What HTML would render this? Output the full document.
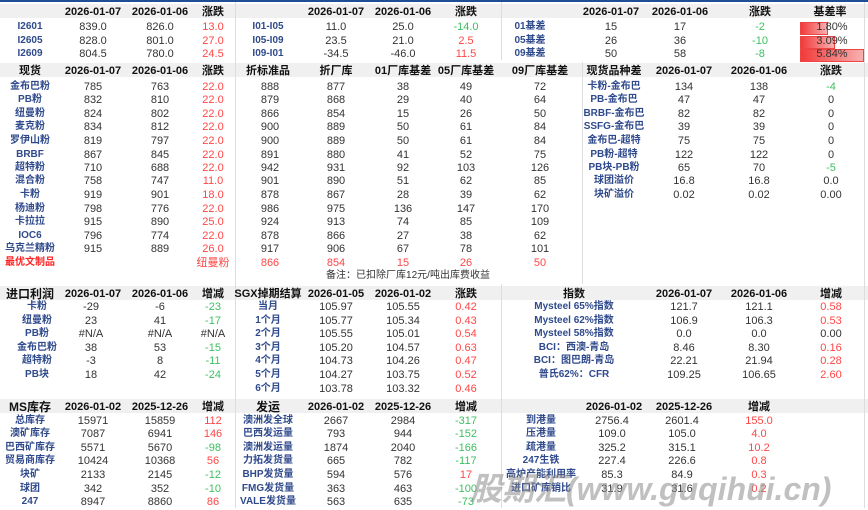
<!DOCTYPE html>
<html><head><meta charset="utf-8"><style>
body{margin:0;width:868px;height:508px;background:#fff;position:relative;overflow:hidden;font-family:"Liberation Sans","Noto Sans CJK SC",sans-serif;}
.bar{position:absolute;left:0;width:868px;height:14px;background:#f0f0f0}
.r{position:absolute;left:0;width:868px;height:14px;font-size:11px;line-height:14px;color:#333}
.r span{position:absolute;transform:translateX(-50%);white-space:nowrap;top:0}
.h span{font-weight:bold;color:#111}
.l{color:#2f4a8c;font-size:10px;font-weight:bold}
.R{color:#ff4646}.G{color:#3cc060}
.vl{position:absolute;width:1px;background:#ddd}
.bb{position:absolute;height:11px;background:linear-gradient(90deg,#f23a3a,#f8b0b0);border:1px solid #e44}
.wm{position:absolute;left:470px;top:464px;font-size:32px;font-weight:bold;font-style:italic;color:rgba(140,140,140,0.55);white-space:nowrap}
</style></head><body>
<div style="position:absolute;left:0;top:0;width:868px;height:2px;background:#1f4e96"></div>
<div class="bar" style="top:4px"></div>
<div class="bar" style="top:63px"></div>
<div class="bar" style="top:286px"></div>
<div class="bar" style="top:399px"></div>
<div class="vl" style="left:235px;top:2px;height:506px"></div>
<div class="vl" style="left:501px;top:2px;height:58px"></div>
<div class="vl" style="left:582px;top:62px;height:222px"></div>
<div class="vl" style="left:501px;top:284px;height:224px"></div>
<div class="vl" style="left:864px;top:2px;height:506px"></div>

<div class="r h" style="top:5px"><span style="left:93px">2026-01-07</span><span style="left:160px">2026-01-06</span><span style="left:213px">涨跌</span><span style="left:336px">2026-01-07</span><span style="left:403px">2026-01-06</span><span style="left:466px">涨跌</span><span style="left:611px">2026-01-07</span><span style="left:680px">2026-01-06</span><span style="left:760px">涨跌</span><span style="left:830px">基差率</span></div>
<div class="bb" style="left:800px;top:22px;width:26px"></div>
<div class="bb" style="left:800px;top:36px;width:33px"></div>
<div class="bb" style="left:800px;top:49px;width:62px"></div>
<div class="r" style="top:20px"><span class="l" style="left:30px">I2601</span><span style="left:93px">839.0</span><span style="left:160px">826.0</span><span class="R" style="left:213px">13.0</span><span class="l" style="left:268px">I01-I05</span><span style="left:336px">11.0</span><span style="left:403px">25.0</span><span class="G" style="left:466px">-14.0</span><span class="l" style="left:530px">01基差</span><span style="left:611px">15</span><span style="left:680px">17</span><span class="G" style="left:760px">-2</span><span style="left:832px">1.80%</span></div>
<div class="r" style="top:34px"><span class="l" style="left:30px">I2605</span><span style="left:93px">828.0</span><span style="left:160px">801.0</span><span class="R" style="left:213px">27.0</span><span class="l" style="left:268px">I05-I09</span><span style="left:336px">23.5</span><span style="left:403px">21.0</span><span class="R" style="left:466px">2.5</span><span class="l" style="left:530px">05基差</span><span style="left:611px">26</span><span style="left:680px">36</span><span class="G" style="left:760px">-10</span><span style="left:832px">3.09%</span></div>
<div class="r" style="top:47px"><span class="l" style="left:30px">I2609</span><span style="left:93px">804.5</span><span style="left:160px">780.0</span><span class="R" style="left:213px">24.5</span><span class="l" style="left:268px">I09-I01</span><span style="left:336px">-34.5</span><span style="left:403px">-46.0</span><span class="R" style="left:466px">11.5</span><span class="l" style="left:530px">09基差</span><span style="left:611px">50</span><span style="left:680px">58</span><span class="G" style="left:760px">-8</span><span style="left:832px">5.84%</span></div>

<div class="r h" style="top:64px"><span style="left:30px">现货</span><span style="left:93px">2026-01-07</span><span style="left:160px">2026-01-06</span><span style="left:213px">涨跌</span><span style="left:268px">折标准品</span><span style="left:336px">折厂库</span><span style="left:403px">01厂库基差</span><span style="left:466px">05厂库基差</span><span style="left:540px">09厂库基差</span><span style="left:614px">现货品种差</span><span style="left:684px">2026-01-07</span><span style="left:759px">2026-01-06</span><span style="left:831px">涨跌</span></div>
<div class="r" style="top:80px"><span class="l" style="left:30px">金布巴粉</span><span style="left:93px">785</span><span style="left:160px">763</span><span class="R" style="left:213px">22.0</span><span style="left:270px">888</span><span style="left:336px">877</span><span style="left:403px">38</span><span style="left:466px">49</span><span style="left:540px">72</span><span class="l" style="left:614px">卡粉-金布巴</span><span style="left:684px">134</span><span style="left:759px">138</span><span class="G" style="left:831px">-4</span></div>
<div class="r" style="top:93px"><span class="l" style="left:30px">PB粉</span><span style="left:93px">832</span><span style="left:160px">810</span><span class="R" style="left:213px">22.0</span><span style="left:270px">879</span><span style="left:336px">868</span><span style="left:403px">29</span><span style="left:466px">40</span><span style="left:540px">64</span><span class="l" style="left:614px">PB-金布巴</span><span style="left:684px">47</span><span style="left:759px">47</span><span style="left:831px">0</span></div>
<div class="r" style="top:107px"><span class="l" style="left:30px">纽曼粉</span><span style="left:93px">824</span><span style="left:160px">802</span><span class="R" style="left:213px">22.0</span><span style="left:270px">866</span><span style="left:336px">854</span><span style="left:403px">15</span><span style="left:466px">26</span><span style="left:540px">50</span><span class="l" style="left:614px">BRBF-金布巴</span><span style="left:684px">82</span><span style="left:759px">82</span><span style="left:831px">0</span></div>
<div class="r" style="top:120px"><span class="l" style="left:30px">麦克粉</span><span style="left:93px">834</span><span style="left:160px">812</span><span class="R" style="left:213px">22.0</span><span style="left:270px">900</span><span style="left:336px">889</span><span style="left:403px">50</span><span style="left:466px">61</span><span style="left:540px">84</span><span class="l" style="left:614px">SSFG-金布巴</span><span style="left:684px">39</span><span style="left:759px">39</span><span style="left:831px">0</span></div>
<div class="r" style="top:134px"><span class="l" style="left:30px">罗伊山粉</span><span style="left:93px">819</span><span style="left:160px">797</span><span class="R" style="left:213px">22.0</span><span style="left:270px">900</span><span style="left:336px">889</span><span style="left:403px">50</span><span style="left:466px">61</span><span style="left:540px">84</span><span class="l" style="left:614px">金布巴-超特</span><span style="left:684px">75</span><span style="left:759px">75</span><span style="left:831px">0</span></div>
<div class="r" style="top:148px"><span class="l" style="left:30px">BRBF</span><span style="left:93px">867</span><span style="left:160px">845</span><span class="R" style="left:213px">22.0</span><span style="left:270px">891</span><span style="left:336px">880</span><span style="left:403px">41</span><span style="left:466px">52</span><span style="left:540px">75</span><span class="l" style="left:614px">PB粉-超特</span><span style="left:684px">122</span><span style="left:759px">122</span><span style="left:831px">0</span></div>
<div class="r" style="top:161px"><span class="l" style="left:30px">超特粉</span><span style="left:93px">710</span><span style="left:160px">688</span><span class="R" style="left:213px">22.0</span><span style="left:270px">942</span><span style="left:336px">931</span><span style="left:403px">92</span><span style="left:466px">103</span><span style="left:540px">126</span><span class="l" style="left:614px">PB块-PB粉</span><span style="left:684px">65</span><span style="left:759px">70</span><span class="G" style="left:831px">-5</span></div>
<div class="r" style="top:174px"><span class="l" style="left:30px">混合粉</span><span style="left:93px">758</span><span style="left:160px">747</span><span class="R" style="left:213px">11.0</span><span style="left:270px">901</span><span style="left:336px">890</span><span style="left:403px">51</span><span style="left:466px">62</span><span style="left:540px">85</span><span class="l" style="left:614px">球团溢价</span><span style="left:684px">16.8</span><span style="left:759px">16.8</span><span style="left:831px">0.0</span></div>
<div class="r" style="top:188px"><span class="l" style="left:30px">卡粉</span><span style="left:93px">919</span><span style="left:160px">901</span><span class="R" style="left:213px">18.0</span><span style="left:270px">878</span><span style="left:336px">867</span><span style="left:403px">28</span><span style="left:466px">39</span><span style="left:540px">62</span><span class="l" style="left:614px">块矿溢价</span><span style="left:684px">0.02</span><span style="left:759px">0.02</span><span style="left:831px">0.00</span></div>
<div class="r" style="top:202px"><span class="l" style="left:30px">杨迪粉</span><span style="left:93px">798</span><span style="left:160px">776</span><span class="R" style="left:213px">22.0</span><span style="left:270px">986</span><span style="left:336px">975</span><span style="left:403px">136</span><span style="left:466px">147</span><span style="left:540px">170</span></div>
<div class="r" style="top:215px"><span class="l" style="left:30px">卡拉拉</span><span style="left:93px">915</span><span style="left:160px">890</span><span class="R" style="left:213px">25.0</span><span style="left:270px">924</span><span style="left:336px">913</span><span style="left:403px">74</span><span style="left:466px">85</span><span style="left:540px">109</span></div>
<div class="r" style="top:229px"><span class="l" style="left:30px">IOC6</span><span style="left:93px">796</span><span style="left:160px">774</span><span class="R" style="left:213px">22.0</span><span style="left:270px">878</span><span style="left:336px">866</span><span style="left:403px">27</span><span style="left:466px">38</span><span style="left:540px">62</span></div>
<div class="r" style="top:242px"><span class="l" style="left:30px">乌克兰精粉</span><span style="left:93px">915</span><span style="left:160px">889</span><span class="R" style="left:213px">26.0</span><span style="left:270px">917</span><span style="left:336px">906</span><span style="left:403px">67</span><span style="left:466px">78</span><span style="left:540px">101</span></div>
<div class="r" style="top:256px"><span class="l" style="left:30px;color:#ff2020">最优文制品</span><span class="R" style="left:213px">纽曼粉</span><span class="R" style="left:270px">866</span><span class="R" style="left:336px">854</span><span class="R" style="left:403px">15</span><span class="R" style="left:466px">26</span><span class="R" style="left:540px">50</span></div>
<div class="r" style="top:269px;font-size:10px"><span style="left:408px">备注：已扣除厂库12元/吨出库费收益</span></div>

<div class="r h" style="top:287px"><span style="left:30px;font-size:12px">进口利润</span><span style="left:93px">2026-01-07</span><span style="left:160px">2026-01-06</span><span style="left:213px">增减</span><span style="left:268px">SGX掉期结算</span><span style="left:336px">2026-01-05</span><span style="left:403px">2026-01-02</span><span style="left:466px">涨跌</span><span style="left:574px">指数</span><span style="left:684px">2026-01-07</span><span style="left:759px">2026-01-06</span><span style="left:831px">增减</span></div>
<div class="r" style="top:300px"><span class="l" style="left:37px">卡粉</span><span style="left:91px">-29</span><span style="left:160px">-6</span><span class="G" style="left:213px">-23</span><span class="l" style="left:268px">当月</span><span style="left:336px">105.97</span><span style="left:403px">105.55</span><span class="R" style="left:466px">0.42</span><span class="l" style="left:574px">Mysteel 65%指数</span><span style="left:684px">121.7</span><span style="left:759px">121.1</span><span class="R" style="left:831px">0.58</span></div>
<div class="r" style="top:314px"><span class="l" style="left:37px">纽曼粉</span><span style="left:91px">23</span><span style="left:160px">41</span><span class="G" style="left:213px">-17</span><span class="l" style="left:268px">1个月</span><span style="left:336px">105.77</span><span style="left:403px">105.34</span><span class="R" style="left:466px">0.43</span><span class="l" style="left:574px">Mysteel 62%指数</span><span style="left:684px">106.9</span><span style="left:759px">106.3</span><span class="R" style="left:831px">0.53</span></div>
<div class="r" style="top:327px"><span class="l" style="left:37px">PB粉</span><span style="left:91px">#N/A</span><span style="left:160px">#N/A</span><span style="left:213px">#N/A</span><span class="l" style="left:268px">2个月</span><span style="left:336px">105.55</span><span style="left:403px">105.01</span><span class="R" style="left:466px">0.54</span><span class="l" style="left:574px">Mysteel 58%指数</span><span style="left:684px">0.0</span><span style="left:759px">0.0</span><span style="left:831px">0.00</span></div>
<div class="r" style="top:341px"><span class="l" style="left:37px">金布巴粉</span><span style="left:91px">38</span><span style="left:160px">53</span><span class="G" style="left:213px">-15</span><span class="l" style="left:268px">3个月</span><span style="left:336px">105.20</span><span style="left:403px">104.57</span><span class="R" style="left:466px">0.63</span><span class="l" style="left:574px">BCI：西澳-青岛</span><span style="left:684px">8.46</span><span style="left:759px">8.30</span><span class="R" style="left:831px">0.16</span></div>
<div class="r" style="top:354px"><span class="l" style="left:37px">超特粉</span><span style="left:91px">-3</span><span style="left:160px">8</span><span class="G" style="left:213px">-11</span><span class="l" style="left:268px">4个月</span><span style="left:336px">104.73</span><span style="left:403px">104.26</span><span class="R" style="left:466px">0.47</span><span class="l" style="left:574px">BCI：图巴朗-青岛</span><span style="left:684px">22.21</span><span style="left:759px">21.94</span><span class="R" style="left:831px">0.28</span></div>
<div class="r" style="top:368px"><span class="l" style="left:37px">PB块</span><span style="left:91px">18</span><span style="left:160px">42</span><span class="G" style="left:213px">-24</span><span class="l" style="left:268px">5个月</span><span style="left:336px">104.27</span><span style="left:403px">103.75</span><span class="R" style="left:466px">0.52</span><span class="l" style="left:574px">普氏62%：CFR</span><span style="left:684px">109.25</span><span style="left:759px">106.65</span><span class="R" style="left:831px">2.60</span></div>
<div class="r" style="top:382px"><span class="l" style="left:268px">6个月</span><span style="left:336px">103.78</span><span style="left:403px">103.32</span><span class="R" style="left:466px">0.46</span></div>

<div class="r h" style="top:400px"><span style="left:30px;font-size:12px">MS库存</span><span style="left:93px">2026-01-02</span><span style="left:160px">2025-12-26</span><span style="left:213px">增减</span><span style="left:268px;font-size:12px">发运</span><span style="left:336px">2026-01-02</span><span style="left:403px">2025-12-26</span><span style="left:466px">增减</span><span style="left:614px">2026-01-02</span><span style="left:684px">2025-12-26</span><span style="left:759px">增减</span></div>
<div class="r" style="top:414px"><span class="l" style="left:30px">总库存</span><span style="left:93px">15971</span><span style="left:160px">15859</span><span class="R" style="left:213px">112</span><span class="l" style="left:268px">澳洲发全球</span><span style="left:336px">2667</span><span style="left:403px">2984</span><span class="G" style="left:466px">-317</span><span class="l" style="left:541px">到港量</span><span style="left:612px">2756.4</span><span style="left:682px">2601.4</span><span class="R" style="left:759px">155.0</span></div>
<div class="r" style="top:427px"><span class="l" style="left:30px">澳矿库存</span><span style="left:93px">7087</span><span style="left:160px">6941</span><span class="R" style="left:213px">146</span><span class="l" style="left:268px">巴西发运量</span><span style="left:336px">793</span><span style="left:403px">944</span><span class="G" style="left:466px">-152</span><span class="l" style="left:541px">压港量</span><span style="left:612px">109.0</span><span style="left:682px">105.0</span><span class="R" style="left:759px">4.0</span></div>
<div class="r" style="top:441px"><span class="l" style="left:30px">巴西矿库存</span><span style="left:93px">5571</span><span style="left:160px">5670</span><span class="G" style="left:213px">-98</span><span class="l" style="left:268px">澳洲发运量</span><span style="left:336px">1874</span><span style="left:403px">2040</span><span class="G" style="left:466px">-166</span><span class="l" style="left:541px">疏港量</span><span style="left:612px">325.2</span><span style="left:682px">315.1</span><span class="R" style="left:759px">10.2</span></div>
<div class="r" style="top:454px"><span class="l" style="left:30px">贸易商库存</span><span style="left:93px">10424</span><span style="left:160px">10368</span><span class="R" style="left:213px">56</span><span class="l" style="left:268px">力拓发货量</span><span style="left:336px">665</span><span style="left:403px">782</span><span class="G" style="left:466px">-117</span><span class="l" style="left:541px">247生铁</span><span style="left:612px">227.4</span><span style="left:682px">226.6</span><span class="R" style="left:759px">0.8</span></div>
<div class="r" style="top:468px"><span class="l" style="left:30px">块矿</span><span style="left:93px">2133</span><span style="left:160px">2145</span><span class="G" style="left:213px">-12</span><span class="l" style="left:268px">BHP发货量</span><span style="left:336px">594</span><span style="left:403px">576</span><span class="R" style="left:466px">17</span><span class="l" style="left:541px">高炉产能利用率</span><span style="left:612px">85.3</span><span style="left:682px">84.9</span><span class="R" style="left:759px">0.3</span></div>
<div class="r" style="top:482px"><span class="l" style="left:30px">球团</span><span style="left:93px">342</span><span style="left:160px">352</span><span class="G" style="left:213px">-10</span><span class="l" style="left:268px">FMG发货量</span><span style="left:336px">363</span><span style="left:403px">463</span><span class="G" style="left:466px">-100</span><span class="l" style="left:541px">进口矿库销比</span><span style="left:612px">31.9</span><span style="left:682px">31.6</span><span class="R" style="left:759px">0.2</span></div>
<div class="r" style="top:495px"><span class="l" style="left:30px">247</span><span style="left:93px">8947</span><span style="left:160px">8860</span><span class="R" style="left:213px">86</span><span class="l" style="left:268px">VALE发货量</span><span style="left:336px">563</span><span style="left:403px">635</span><span class="G" style="left:466px">-73</span></div>
<div class="wm">股期汇(www.guqihui.cn)</div>
</body></html>
